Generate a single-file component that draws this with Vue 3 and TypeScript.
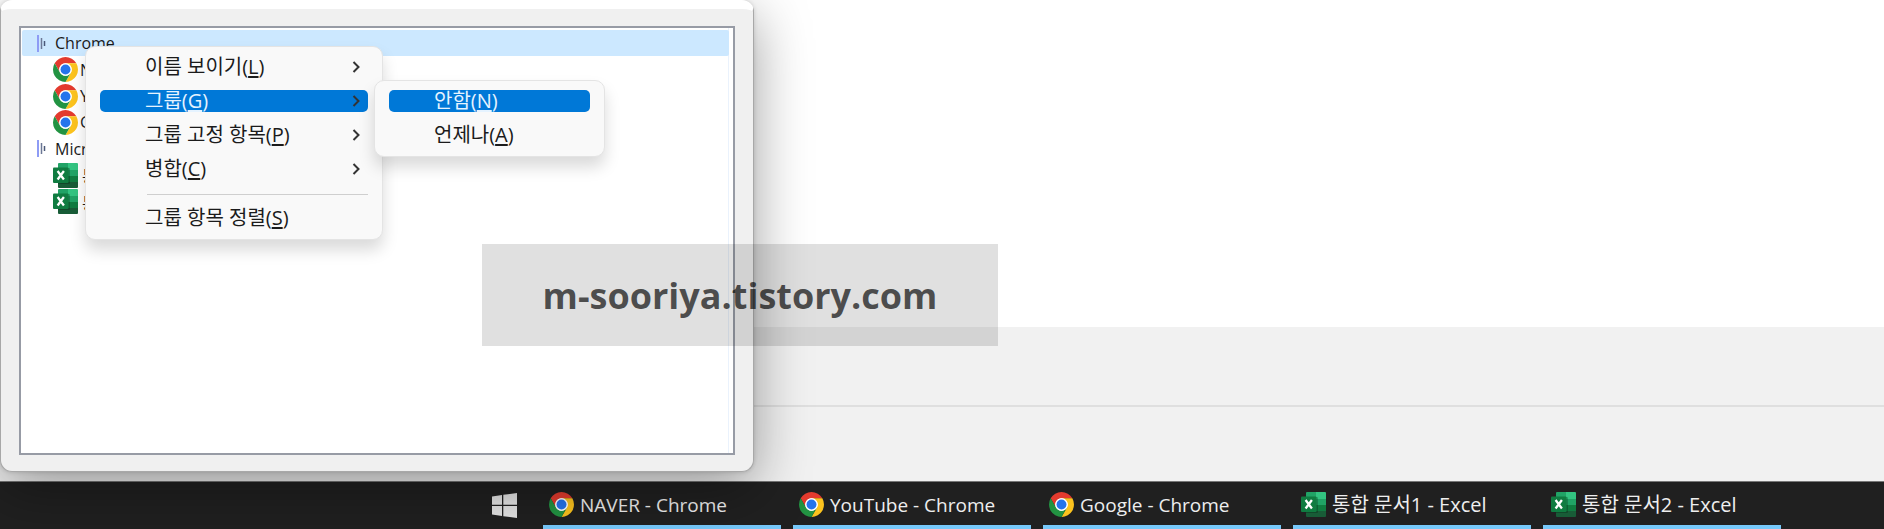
<script setup lang="ts">
interface MenuEntry {
  label: string
  key: string
  submenu?: boolean
  active?: boolean
  divided?: boolean
}

interface TreeRow {
  label: string
  kind: 'group' | 'chrome' | 'excel'
  selected?: boolean
}

interface Task {
  title: string
  icon: 'chrome' | 'excel'
}

const rows: TreeRow[] = [
  { label: 'Chrome', kind: 'group', selected: true },
  { label: 'NAVER', kind: 'chrome' },
  { label: 'YouTube', kind: 'chrome' },
  { label: 'Google', kind: 'chrome' },
  { label: 'Microsoft', kind: 'group' },
  { label: '통합 문서1', kind: 'excel' },
  { label: '통합 문서2', kind: 'excel' },
]

const menu: MenuEntry[] = [
  { label: '이름 보이기', key: 'L', submenu: true },
  { label: '그룹', key: 'G', submenu: true, active: true },
  { label: '그룹 고정 항목', key: 'P', submenu: true },
  { label: '병합', key: 'C', submenu: true },
  { label: '그룹 항목 정렬', key: 'S', divided: true },
]

const submenu: MenuEntry[] = [
  { label: '안함', key: 'N', active: true },
  { label: '언제나', key: 'A' },
]

const tasks: Task[] = [
  { title: 'NAVER - Chrome', icon: 'chrome' },
  { title: 'YouTube - Chrome', icon: 'chrome' },
  { title: 'Google - Chrome', icon: 'chrome' },
  { title: '통합 문서1 - Excel', icon: 'excel' },
  { title: '통합 문서2 - Excel', icon: 'excel' },
]
</script>

<template>
  <div class="screen">
    <svg class="defs" aria-hidden="true">
      <symbol id="chrome" viewBox="0 0 48 48">
        <circle cx="24" cy="24" r="13" fill="#fff" />
        <path d="M24 12H44.78A24 24 0 0 0 3.22 12L13.61 30A12 12 0 0 1 24 12Z" fill="#e33b2e" />
        <path d="M24 12H44.78A24 24 0 0 0 3.22 12L13.61 30A12 12 0 0 1 24 12Z" fill="#fcc31e" transform="rotate(120 24 24)" />
        <path d="M24 12H44.78A24 24 0 0 0 3.22 12L13.61 30A12 12 0 0 1 24 12Z" fill="#229342" transform="rotate(240 24 24)" />
        <circle cx="24" cy="24" r="12" fill="#fff" />
        <circle cx="24" cy="24" r="9.5" fill="#2574ec" />
      </symbol>
      <symbol id="excel" viewBox="0 0 25 25">
        <path d="M6 0H15V7H5V1Q5 0 6 0Z" fill="#21a366" />
        <path d="M15 0H24Q25 0 25 1V7H15Z" fill="#33c481" />
        <path d="M5 7H15V13H5Z" fill="#107c41" />
        <path d="M15 7H25V13H15Z" fill="#21a366" />
        <path d="M5 13H15V25H6Q5 25 5 24Z" fill="#185c37" />
        <path d="M15 13H25V19H15Z" fill="#107c41" />
        <path d="M15 19H25V24Q25 25 24 25H15Z" fill="#185c37" />
        <path d="M5 5H16Q17 5 17 6V20Q17 21 16 21H5Z" fill="#000" opacity=".22" />
        <rect y="4.500" width="15.500" height="15.500" rx="1" fill="#107c41" />
        <path d="M4.600 8L10.900 16.500M10.900 8L4.600 16.500" stroke="#fff" stroke-width="2.300" fill="none" />
      </symbol>
    </svg>

    <main class="desktop">
      <div class="page-area"></div>
      <div class="page-band"></div>
      <div class="page-band"></div>
    </main>

    <nav class="taskbar" aria-label="작업 표시줄">
      <button class="start" type="button" aria-label="시작">
        <svg viewBox="0 0 25 25" aria-hidden="true">
          <path d="M0 3.500L10 2V11.800H0ZM11.300 1.800L25 0V11.800H11.300ZM0 13H10V23L0 21.500ZM11.300 13H25V25L11.300 23.200Z" fill="#e4e4e4" />
        </svg>
      </button>
      <button v-for="task in tasks" :key="task.title" :class="['task', task.icon + '-task']" type="button">
        <svg class="icon" aria-hidden="true"><use :href="'#' + task.icon" /></svg>
        <span>{{ task.title }}</span>
      </button>
    </nav>

    <section class="window">
      <ul class="tree">
        <li v-for="row in rows" :key="row.label" :class="['row', row.kind, { selected: row.selected }]">
          <svg v-if="row.kind === 'group'" class="marker" viewBox="0 0 9 17" aria-hidden="true">
            <path d="M1 0V17" stroke="#8e9cf5" stroke-width="2" />
            <path d="M4.500 3V14" stroke="#6c7896" stroke-width="1.500" />
            <path d="M7.500 6V11" stroke="#4a5878" stroke-width="1.500" />
          </svg>
          <svg v-else class="icon" aria-hidden="true"><use :href="'#' + row.kind" /></svg>
          <span>{{ row.label }}</span>
        </li>
      </ul>
    </section>

    <ul class="menu main-menu">
      <li v-for="item in menu" :key="item.key" :class="{ divided: item.divided }">
        <button :class="['entry', { active: item.active }]" type="button">
          <span>{{ item.label }}(<u>{{ item.key }}</u>)</span>
          <svg v-if="item.submenu" class="chevron" viewBox="0 0 8 12" aria-hidden="true">
            <path d="M1.500 1L6.500 6L1.500 11" fill="none" stroke="currentColor" stroke-width="2" />
          </svg>
        </button>
      </li>
    </ul>

    <ul class="menu sub-menu">
      <li v-for="item in submenu" :key="item.key">
        <button :class="['entry', { active: item.active }]" type="button">
          <span>{{ item.label }}(<u>{{ item.key }}</u>)</span>
        </button>
      </li>
    </ul>

    <div class="watermark">m-sooriya.tistory.com</div>
  </div>
</template>

<style>
body {
  margin: 0;
}
</style>

<style scoped>
.screen {
  position: relative;
  display: flex;
  flex-direction: column;
  min-height: 100vh;
  overflow: hidden;
  background: #fff;
  font-family: "Open Sans", "Noto Sans CJK KR", sans-serif;
  color: #1b1b1b;
}

.screen * {
  box-sizing: border-box;
}

.defs {
  position: absolute;
  width: 0;
  height: 0;
}

ul {
  list-style: none;
  margin: 0;
  padding: 0;
}

button {
  border: 0;
  margin: 0;
  padding: 0;
  background: none;
  font: inherit;
  color: inherit;
}

.icon {
  flex: none;
  width: 25px;
  height: 25px;
}

.desktop {
  flex: 1;
  display: flex;
  flex-direction: column;
}

.page-area {
  flex: 1;
}

.page-band {
  height: 78px;
  background: #f1f1f1;
}

.page-band + .page-band {
  height: 76px;
  border-top: 2px solid #dfdfdf;
}

.taskbar {
  display: flex;
  gap: 12px;
  height: 48px;
  padding-left: 477px;
  border-top: 1px solid #777;
  background: #202020;
  color: #eee;
  font-size: 19px;
}

.start {
  display: flex;
  align-items: center;
  justify-content: center;
  width: 54px;
  padding-bottom: 1px;
}

.start svg {
  width: 25px;
  height: 25px;
}

.task {
  display: flex;
  align-items: center;
  gap: 6px;
  width: 238px;
  padding: 4px 6px 2px;
  border-bottom: 4px solid #76c8fa;
  line-height: 26px;
  white-space: nowrap;
}

.excel-task {
  padding-left: 8px;
  font-size: 20px;
}

.window {
  position: absolute;
  top: 0;
  bottom: 57px;
  left: 0;
  width: 40%;
  display: flex;
  padding: 17px 18px 16px;
  border: 1px solid #a8a8a8;
  border-top: 9px solid #fff;
  border-radius: 12px;
  background: #f0f0f0;
  box-shadow: 0 16px 56px rgba(0, 0, 0, 0.38), 0 0 4px rgba(0, 0, 0, 0.15);
}

.tree {
  flex: 1;
  display: grid;
  grid-auto-rows: 1fr;
  padding: 2px 4px 238px 1px;
  border: 2px solid #979ba5;
  background: linear-gradient(#eaf2fc, #eaf2fc) right 4px top / 1px 100% no-repeat #fff;
  font-size: 16px;
}

.row {
  display: flex;
  align-items: center;
  gap: 2px;
  padding-left: 31px;
  white-space: nowrap;
}

.group {
  gap: 9px;
  padding-left: 15px;
}

.excel {
  gap: 4px;
}

.selected {
  border-radius: 2px;
  background: #cce8ff;
}

.marker {
  width: 9px;
  height: 17px;
}

.menu {
  position: absolute;
  display: flex;
  flex-direction: column;
  gap: 12px;
  border: 1px solid #e4e4e4;
  border-radius: 10px;
  background: #f9f9f9;
  box-shadow: 0 10px 16px rgba(0, 0, 0, 0.15);
  font-size: 20px;
}

.main-menu {
  top: 46px;
  left: 85px;
  width: 298px;
  padding: 9px 14px 10px;
}

.sub-menu {
  top: 80px;
  left: 374px;
  width: 231px;
  padding: 9px 14px 10px;
}

.entry {
  display: flex;
  align-items: center;
  justify-content: space-between;
  width: 100%;
  height: 22px;
  padding: 0 8px 0 45px;
  border-radius: 5px;
  line-height: 22px;
  white-space: nowrap;
}

.active {
  background: #0078d7;
}

.active span {
  color: #e5f3ff;
}

.entry u {
  text-underline-offset: 2px;
}

.chevron {
  width: 8px;
  height: 12px;
  color: #333;
}

.divided::before {
  content: "";
  display: block;
  height: 1px;
  margin: 2px 0 12px 47px;
  background: #cfcfcf;
}

.watermark {
  position: absolute;
  top: 244px;
  left: 482px;
  display: flex;
  align-items: center;
  justify-content: center;
  width: 516px;
  height: 102px;
  padding-top: 2px;
  background: rgba(0, 0, 0, 0.12);
  color: rgba(0, 0, 0, 0.68);
  font-size: 36px;
  font-weight: 700;
  line-height: 50px;
}
</style>
